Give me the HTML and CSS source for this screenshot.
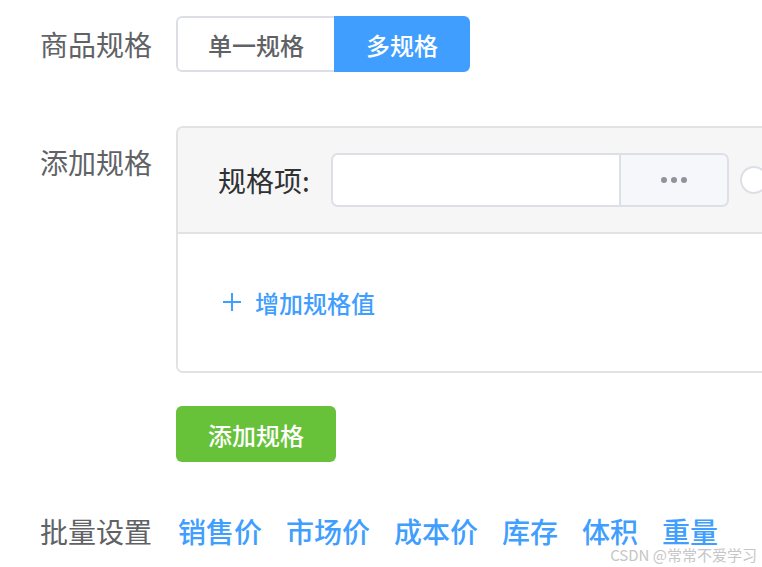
FILE: index.html
```html
<!DOCTYPE html>
<html lang="zh">
<head>
<meta charset="utf-8">
<title>商品规格</title>
<link rel="stylesheet" href="styles.css">
</head>
<body>
<div class="form">
  <div class="row">
    <div class="label">商品规格</div>
    <div class="radio-group">
      <span class="radio-btn">单一规格</span>
      <span class="radio-btn active">多规格</span>
    </div>
  </div>

  <div class="row row-spec">
    <div class="label label-spec">添加规格</div>
    <div class="spec-box">
      <div class="spec-head">
        <span class="spec-name">规格项:</span>
        <div class="input-group">
          <div class="input"></div>
          <div class="append"><span class="dot"></span><span class="dot"></span><span class="dot"></span></div>
        </div>
        <span class="circle"></span>
      </div>
      <div class="spec-body">
        <span class="add-value">
          <svg class="plus" viewBox="0 0 20 20" width="20" height="20"><path d="M10 1V19M1 10H19" stroke="#409eff" stroke-width="2" fill="none"/></svg>
          增加规格值
        </span>
      </div>
    </div>
  </div>

  <div class="row row-btn">
    <div class="label"></div>
    <button class="btn-success">添加规格</button>
  </div>

  <div class="row row-batch">
    <div class="label">批量设置</div>
    <div class="links">
      <span class="link">销售价</span>
      <span class="link">市场价</span>
      <span class="link">成本价</span>
      <span class="link">库存</span>
      <span class="link">体积</span>
      <span class="link">重量</span>
    </div>
  </div>
</div>
<div class="watermark">CSDN @常常不爱学习</div>
</body>
</html>
```

FILE: styles.css
```css
html, body {
  margin: 0;
  padding: 0;
  overflow: hidden;
  background: #ffffff;
}
body {
  font-family: "Noto Sans CJK SC", "Noto Sans", sans-serif;
  width: 762px;
  height: 567px;
  position: relative;
}
.form {
  padding-top: 16px;
}
.row {
  display: flex;
  align-items: flex-start;
}
.label {
  flex: 0 0 176px;
  box-sizing: border-box;
  padding-right: 24px;
  text-align: right;
  font-size: 28px;
  line-height: 56px;
  color: #606266;
}
.radio-group {
  display: flex;
  height: 56px;
}
.radio-btn {
  display: flex;
  align-items: center;
  justify-content: center;
  box-sizing: border-box;
  height: 56px;
  font-size: 24px;
  font-weight: 500;
  color: #606266;
  border: 2px solid #dcdfe6;
  background: #fff;
}
.radio-btn:first-child {
  width: 158px;
  border-radius: 6px 0 0 6px;
  border-right: none;
}
.radio-btn.active {
  width: 136px;
  background: #409eff;
  border-color: #409eff;
  color: #fff;
  border-radius: 0 6px 6px 0;
}
.row-spec {
  margin-top: 54px;
}
.label-spec {
  padding-top: 8px;
}
.spec-box {
  flex: 0 0 auto;
  width: 700px;
  border: 2px solid #e2e2e2;
  border-radius: 7px;
  overflow: hidden;
}
.spec-head {
  display: flex;
  align-items: center;
  background: #f6f6f6;
  padding: 25px 0 25px 40px;
  border-bottom: 2px solid #e2e2e2;
}
.spec-name {
  font-size: 28px;
  line-height: 50px;
  color: #303133;
  width: 113px;
}
.input-group {
  display: flex;
  width: 398px;
  height: 54px;
  box-sizing: border-box;
  border: 2px solid #dcdfe6;
  border-radius: 7px;
  overflow: hidden;
}
.input {
  width: 286px;
  background: #fff;
  border-right: 2px solid #dcdfe6;
}
.append {
  flex: 1;
  display: flex;
  align-items: center;
  justify-content: center;
  gap: 4px;
  background: #f5f7fa;
}
.dot {
  width: 6px;
  height: 6px;
  border-radius: 50%;
  background: #909399;
}
.circle {
  margin-left: 11px;
  width: 28px;
  height: 28px;
  box-sizing: border-box;
  border: 2px solid #dcdfe6;
  border-radius: 50%;
  background: #fff;
}
.spec-body {
  padding: 40px 44px 41px 44px;
  background: #fff;
}
.add-value {
  display: flex;
  align-items: center;
  height: 56px;
  font-size: 24px;
  font-weight: 500;
  color: #409eff;
}
.plus {
  margin-right: 13px;
}
.row-btn {
  margin-top: 33px;
}
.btn-success {
  width: 160px;
  height: 56px;
  border: none;
  border-radius: 6px;
  background: #67c23a;
  color: #fff;
  font-family: inherit;
  font-size: 24px;
  font-weight: 500;
  padding: 0;
}
.row-batch {
  margin-top: 41px;
}
.links {
  display: flex;
  padding-left: 2px;
}
.link {
  font-size: 28px;
  line-height: 56px;
  font-weight: 500;
  color: #409eff;
  margin-right: 24px;
}
.watermark {
  position: absolute;
  right: 5px;
  bottom: 2px;
  font-size: 15px;
  color: #c6c6c6;
  white-space: nowrap;
}
```
